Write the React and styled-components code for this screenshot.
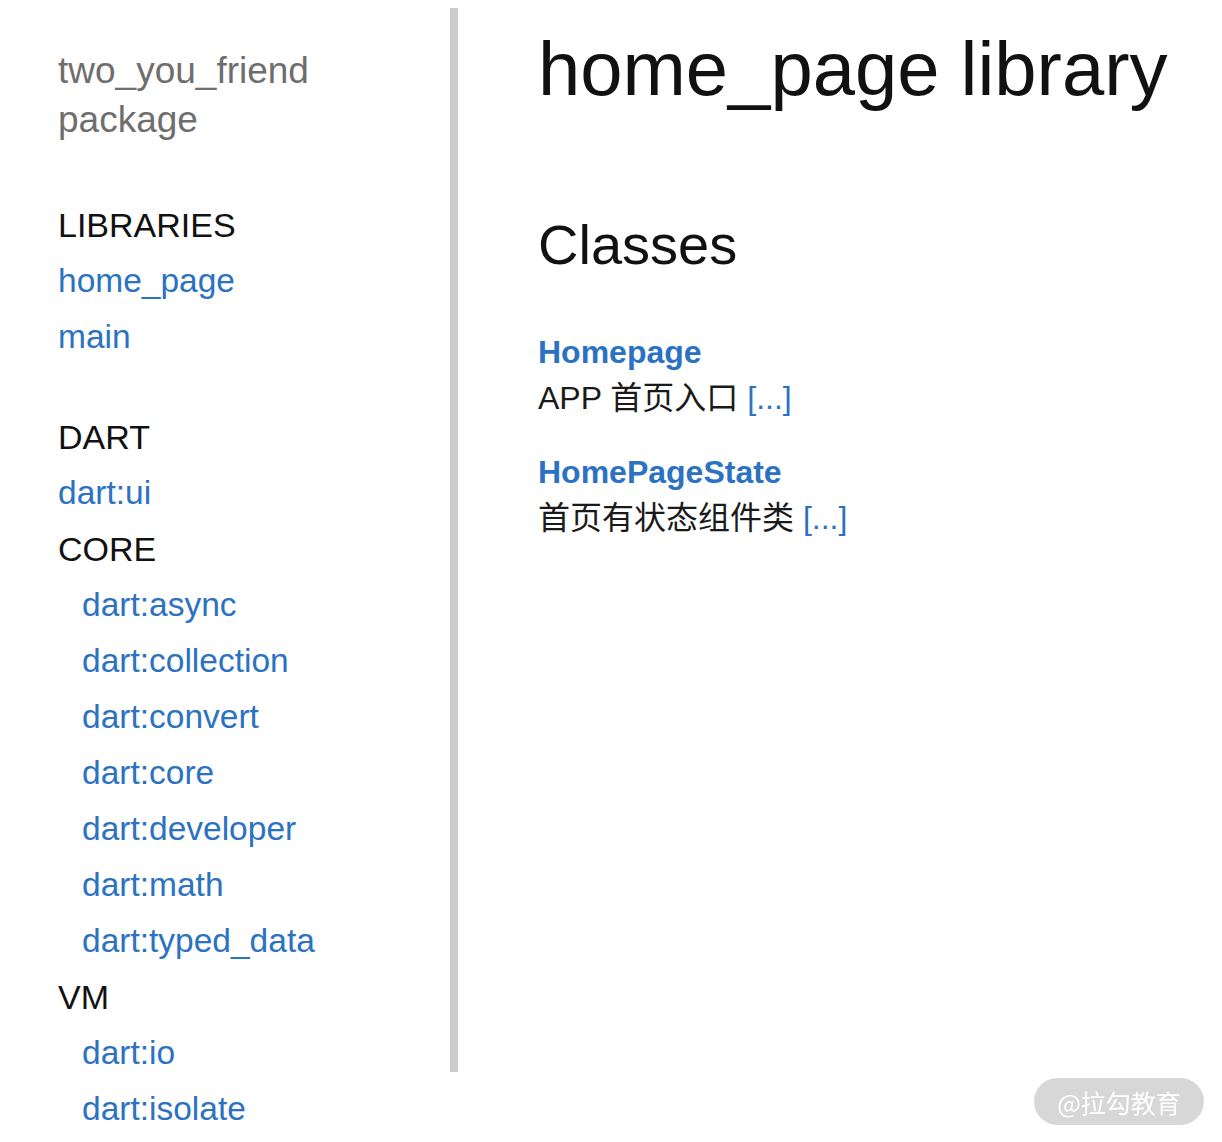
import React from "react";
import styled, { createGlobalStyle } from "styled-components";

const GlobalStyle = createGlobalStyle`
  html, body {
    margin: 0;
    padding: 0;
    overflow: hidden;
    background: #fff;
  }
  body {
    font-family: "Liberation Sans", Arial, "Noto Sans CJK SC", sans-serif;
    color: #111;
  }
`;

const Page = styled.div`
  display: flex;
  align-items: flex-start;
  min-height: 1142px;
`;

const Sidebar = styled.nav`
  width: 392px;
  flex-shrink: 0;
  padding: 46px 0 0 58px;
`;

const PackageName = styled.div`
  font-size: 37px;
  line-height: 49px;
  color: #6e6e6e;
  width: 320px;
`;

const Group = styled.div`
  margin-top: ${(p) => p.$gap}px;
`;

const GroupTitle = styled.div`
  font-size: 34px;
  line-height: 56px;
  color: #111;
  text-transform: uppercase;
`;

const NavLink = styled.a`
  display: block;
  font-size: 33.5px;
  line-height: 56px;
  color: #2b72c2;
  text-decoration: none;
  padding-left: ${(p) => (p.$indent ? 24 : 0)}px;
`;

const Divider = styled.div`
  width: 8px;
  height: 1064px;
  margin-top: 8px;
  background: #cccccc;
  flex-shrink: 0;
`;

const Main = styled.main`
  padding: 23px 0 0 80px;
`;

const Title = styled.h1`
  margin: 0;
  font-size: 76px;
  font-weight: 400;
  line-height: 91px;
  white-space: nowrap;
`;

const SectionTitle = styled.h2`
  margin: 97px 0 0;
  font-size: 56px;
  font-weight: 400;
  line-height: 67px;
`;

const ClassList = styled.dl`
  margin: 51px 0 0;
`;

const ClassName = styled.dt`
  font-size: 32px;
  line-height: 46px;
  font-weight: 700;

  a {
    color: #2b72c2;
    text-decoration: none;
  }
`;

const ClassDesc = styled.dd`
  margin: 0 0 28px;
  font-size: 32px;
  line-height: 46px;
  color: #1a1a1a;

  a {
    color: #2b72c2;
    text-decoration: none;
  }
`;

const Watermark = styled.div`
  position: fixed;
  right: 18px;
  bottom: 17px;
  width: 170px;
  height: 47px;
  border-radius: 24px;
  background: #d7d7d7;
  color: #fff;
  font-family: "Noto Sans CJK SC", sans-serif;
  font-size: 25px;
  display: flex;
  align-items: center;
  justify-content: center;
`;

const groups = [
  {
    title: "Libraries",
    gap: 53,
    items: [{ name: "home_page" }, { name: "main" }],
  },
  {
    title: "Dart",
    gap: 44,
    items: [
      { name: "dart:ui" },
      { heading: "Core" },
      { name: "dart:async", indent: true },
      { name: "dart:collection", indent: true },
      { name: "dart:convert", indent: true },
      { name: "dart:core", indent: true },
      { name: "dart:developer", indent: true },
      { name: "dart:math", indent: true },
      { name: "dart:typed_data", indent: true },
      { heading: "VM" },
      { name: "dart:io", indent: true },
      { name: "dart:isolate", indent: true },
    ],
  },
];

const classes = [
  { name: "Homepage", desc: "APP 首页入口" },
  { name: "HomePageState", desc: "首页有状态组件类" },
];

export default function App() {
  return (
    <>
      <GlobalStyle />
      <Page>
        <Sidebar>
          <PackageName>two_you_friend package</PackageName>
          {groups.map((g) => (
            <Group key={g.title} $gap={g.gap}>
              <GroupTitle>{g.title}</GroupTitle>
              {g.items.map((it) =>
                it.heading ? (
                  <GroupTitle key={it.heading}>{it.heading}</GroupTitle>
                ) : (
                  <NavLink key={it.name} href="#" $indent={it.indent}>
                    {it.name}
                  </NavLink>
                )
              )}
            </Group>
          ))}
        </Sidebar>
        <Divider />
        <Main>
          <Title>home_page library</Title>
          <SectionTitle>Classes</SectionTitle>
          <ClassList>
            {classes.map((c) => (
              <React.Fragment key={c.name}>
                <ClassName>
                  <a href="#">{c.name}</a>
                </ClassName>
                <ClassDesc>
                  {c.desc} <a href="#">[...]</a>
                </ClassDesc>
              </React.Fragment>
            ))}
          </ClassList>
        </Main>
      </Page>
      <Watermark>@拉勾教育</Watermark>
    </>
  );
}
